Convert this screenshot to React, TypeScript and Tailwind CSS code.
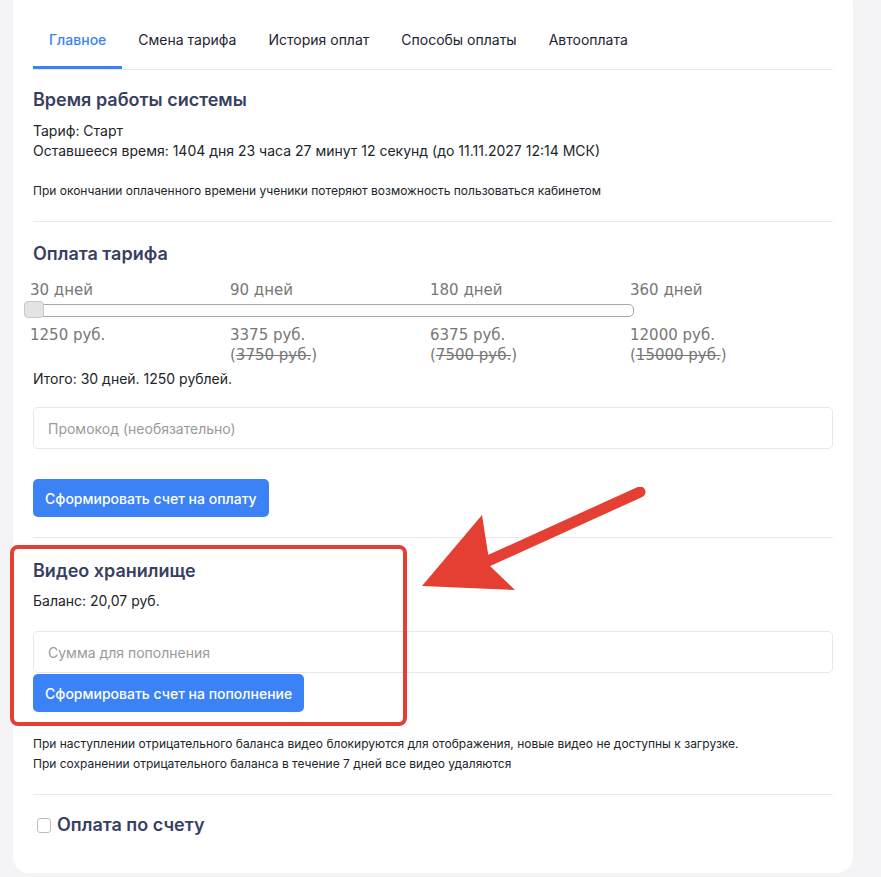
import { useState } from "react"

const TABS = ["Главное", "Смена тарифа", "История оплат", "Способы оплаты", "Автооплата"]

const PLANS = [
	{ days: "30 дней", price: "1250 руб.", old: null },
	{ days: "90 дней", price: "3375 руб.", old: "3750 руб." },
	{ days: "180 дней", price: "6375 руб.", old: "7500 руб." },
	{ days: "360 дней", price: "12000 руб.", old: "15000 руб." },
]

function Heading({ children }: { children: React.ReactNode }) {
	return <h3 className="text-[18px] font-semibold leading-6 text-[#383f61]">{children}</h3>
}

function Divider() {
	return <div className="h-px bg-[#e9eaee]" />
}

export default function App() {
	const [tab, setTab] = useState(0)
	const [promo, setPromo] = useState("")
	const [amount, setAmount] = useState("")
	const [byInvoice, setByInvoice] = useState(false)

	return (
		<div className="min-h-[877px] bg-[#f4f4f6] pl-[13px] pr-[28px] pb-[4px] font-['Inter',sans-serif] text-[#212529]">
			<div className="relative -mt-3 rounded-2xl bg-white px-5 pb-[36px] pt-[22px]">
				{/* Tabs */}
				<div className="flex border-b border-[#e9eaee]">
					{TABS.map((name, i) => (
						<button
							key={name}
							onClick={() => setTab(i)}
							className={
								i === tab
									? "border-b-[3px] border-[#3b82f6] px-[16px] pb-[16px] pt-[20px] text-[14px] font-medium leading-5 text-[#3b82f6]"
									: "border-b-[3px] border-transparent px-[16px] pb-[16px] pt-[20px] text-[14px] leading-5 text-[#1f2333]"
							}>
							{name}
						</button>
					))}
				</div>

				{/* Время работы системы */}
				<div className="pt-[18px] pb-[22px]">
					<Heading>Время работы системы</Heading>
					<div className="mt-[9px] text-[14px] leading-5">
						<p>Тариф: Старт</p>
						<p>Оставшееся время: 1404 дня 23 часа 27 минут 12 секунд (до 11.11.2027 12:14 МСК)</p>
					</div>
					<p className="mt-[22px] text-[12px] leading-4">
						При окончании оплаченного времени ученики потеряют возможность пользоваться кабинетом
					</p>
				</div>
				<Divider />

				{/* Оплата тарифа */}
				<div className="pt-[20px] pb-[20px]">
					<Heading>Оплата тарифа</Heading>
					<div className="-ml-[3px] mt-[14px] font-['DejaVu_Sans',sans-serif] text-[15px] leading-5 text-[#777]">
						<div className="flex">
							{PLANS.map((p) => (
								<div key={p.days} className="w-[200px]">
									{p.days}
								</div>
							))}
						</div>
						<div className="relative -ml-[6px] mt-[1px] h-[17px] w-[610px]">
							<div className="absolute left-0 right-0 top-[3px] h-[13px] rounded-[5px] border border-[#a8a8a8] bg-white" />
							<div className="absolute left-0 top-0 h-[17px] w-[20px] rounded-[4px] border border-[#c9c9c9] bg-[#e3e3e3]" />
						</div>
						<div className="mt-[7px] flex">
							{PLANS.map((p) => (
								<div key={p.price} className="w-[200px]">
									<div>{p.price}</div>
									{p.old && (
										<div>
											(<span className="line-through">{p.old}</span>)
										</div>
									)}
								</div>
							))}
						</div>
					</div>
					<p className="mt-[4px] text-[14px] leading-5">Итого: 30 дней. 1250 рублей.</p>

					<input
						value={promo}
						onChange={(e) => setPromo(e.target.value)}
						placeholder="Промокод (необязательно)"
						className="mt-[18px] block h-[42px] w-full rounded-[5px] border border-[#e6e7ec] px-[14px] text-[14px] text-[#212529] outline-none placeholder:text-[#9a9a9a]"
					/>
					<button className="mt-[30px] h-[38px] rounded-[5px] bg-[#3b82f6] px-3 text-[14px] font-medium text-white">
						Сформировать счет на оплату
					</button>
				</div>
				<Divider />

				{/* Видео хранилище */}
				<div className="pt-[21px] pb-[22px]">
					<Heading>Видео хранилище</Heading>
					<p className="mt-[8px] text-[14px] leading-5">Баланс: 20,07 руб.</p>
					<input
						value={amount}
						onChange={(e) => setAmount(e.target.value)}
						placeholder="Сумма для пополнения"
						className="mt-[20px] block h-[42px] w-full rounded-[5px] border border-[#e6e7ec] px-[14px] text-[14px] text-[#212529] outline-none placeholder:text-[#9a9a9a]"
					/>
					<button className="mt-px h-[38px] rounded-[5px] bg-[#3b82f6] px-3 text-[14px] font-medium text-white">
						Сформировать счет на пополнение
					</button>
					<div className="mt-[24px] space-y-[4px] text-[12px] leading-4">
						<p>При наступлении отрицательного баланса видео блокируются для отображения, новые видео не доступны к загрузке.</p>
						<p>При сохранении отрицательного баланса в течение 7 дней все видео удаляются</p>
					</div>
				</div>
				<Divider />

				{/* Оплата по счету */}
				<label className="mt-[18px] flex cursor-pointer items-center gap-[6px] pl-1">
					<input
						type="checkbox"
						checked={byInvoice}
						onChange={(e) => setByInvoice(e.target.checked)}
						className="h-[15px] w-[14px] appearance-none rounded-[3px] border border-[#bdbdbd] bg-white checked:bg-[#3b82f6]"
					/>
					<span className="text-[18px] font-semibold leading-6 text-[#383f61]">Оплата по счету</span>
				</label>

				{/* Annotation: red frame */}
				<div className="pointer-events-none absolute left-[-3px] top-[557px] h-[181px] w-[397px] rounded-[8px] border-[4px] border-[#e53e33]" />

				{/* Annotation: arrow */}
				<svg
					className="pointer-events-none absolute left-[374px] top-[499px]"
					width="260"
					height="120"
					viewBox="387 487 260 120"
					fill="#e53e33">
					<line x1="640" y1="492" x2="488" y2="561" stroke="#e53e33" strokeWidth="11" strokeLinecap="round" />
					<polygon points="482,515 422,586 515,590 490,566" />
				</svg>
			</div>
		</div>
	)
}
